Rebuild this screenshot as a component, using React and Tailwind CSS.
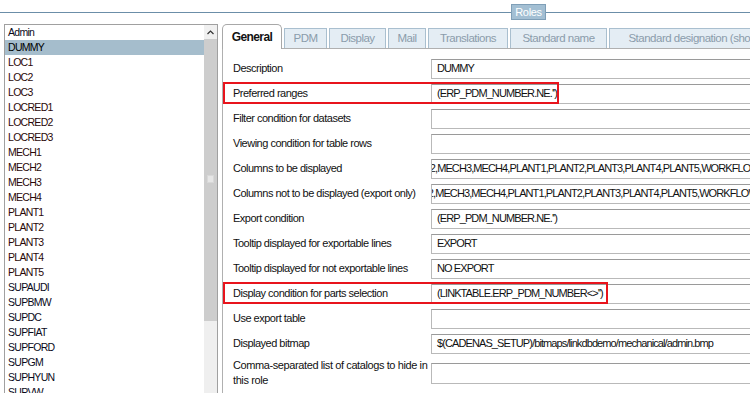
import React from "react";

const roles = [
  "Admin", "DUMMY", "LOC1", "LOC2", "LOC3", "LOCRED1", "LOCRED2", "LOCRED3",
  "MECH1", "MECH2", "MECH3", "MECH4", "PLANT1", "PLANT2", "PLANT3", "PLANT4",
  "PLANT5", "SUPAUDI", "SUPBMW", "SUPDC", "SUPFIAT", "SUPFORD", "SUPGM", "SUPHYUN", "SUPVW",
];

const tabs = [
  { label: "PDM", w: "w-[43px]" },
  { label: "Display", w: "w-[57px]" },
  { label: "Mail", w: "w-[38px]" },
  { label: "Translations", w: "w-[80px]" },
  { label: "Standard name", w: "w-[97px]" },
  { label: "Standard designation (short)", w: "w-[170px]" },
];

const COLS = "MECH2,MECH3,MECH4,PLANT1,PLANT2,PLANT3,PLANT4,PLANT5,WORKFLOW1,WORKFLOW2";

const fields = [
  { label: "Description", value: "DUMMY" },
  { label: "Preferred ranges", value: "(ERP_PDM_NUMBER.NE.'')", mark: "w-[336px]" },
  { label: "Filter condition for datasets", value: "" },
  { label: "Viewing condition for table rows", value: "" },
  { label: "Columns to be displayed", value: COLS, shift: "-ml-[36px]" },
  { label: "Columns not to be displayed (export only)", value: COLS, shift: "-ml-[38px]" },
  { label: "Export condition", value: "(ERP_PDM_NUMBER.NE.'')" },
  { label: "Tooltip displayed for exportable lines", value: "EXPORT" },
  { label: "Tooltip displayed for not exportable lines", value: "NO EXPORT" },
  { label: "Display condition for parts selection", value: "(LINKTABLE.ERP_PDM_NUMBER<>'')", mark: "w-[385px]" },
  { label: "Use export table", value: "" },
  { label: "Displayed bitmap", value: "$(CADENAS_SETUP)/bitmaps/linkdbdemo/mechanical/admin.bmp" },
];

const FieldRow = ({ label, value, mark, shift }) => (
  <div className="relative flex items-center h-[25px] pl-[10px]">
    <div className="w-[198px] shrink-0 text-[11px] tracking-[-0.5px] whitespace-nowrap text-[#111]">{label}</div>
    <div className="h-[20px] w-[400px] shrink-0 border border-[#b9b9b9] border-t-[#9a9a9a] bg-white overflow-hidden flex items-center pl-[5px]">
      <div className={`whitespace-nowrap text-[11px] tracking-[-0.9px] text-[#111] ${shift || ""}`}>{value}</div>
    </div>
    {mark && (
      <div className={`absolute left-0 top-[1px] h-[22px] border-2 border-[#e8141c] ${mark}`} />
    )}
  </div>
);

export default function App() {
  return (
    <div className="w-[750px] h-[393px] bg-white overflow-hidden font-['Liberation_Sans',Arial,sans-serif] text-[#111]">
      {/* Roles header */}
      <div className="flex items-center h-[24px]">
        <div className="w-[511px] h-px bg-[#6b8ea8]" />
        <div className="h-[16px] w-[35px] bg-[#a3bfd3] border border-[#7f9fb7] text-white text-[11px] tracking-[-0.3px] flex items-center justify-center">
          Roles
        </div>
        <div className="flex-1 h-px bg-[#6b8ea8]" />
      </div>

      <div className="flex h-[369px] overflow-hidden">
        {/* Role list */}
        <div className="ml-[4px] w-[214px] shrink-0 h-[380px] border border-[#a0a0a0] flex">
          <div className="flex-1">
            {roles.map((r, i) => (
              <div
                key={r}
                className={`h-[15px] pl-[3px] flex items-center text-[10.5px] tracking-[-0.7px] ${
                  i === 1 ? "bg-[#a5bdcc] text-black" : i >= 2 && i <= 16 ? "text-[#2a0808]" : "text-[#0a0a1a]"
                }`}
              >
                {r}
              </div>
            ))}
          </div>
          <div className="w-[13px] flex flex-col">
            <div className="h-[14px] bg-[#f0f0f0] flex items-center justify-center">
              <svg width="7" height="5" viewBox="0 0 7 5">
                <path d="M0.5 4 L3.5 1 L6.5 4" fill="none" stroke="#333" strokeWidth="1.2" />
              </svg>
            </div>
            <div className="h-[282px] bg-[#cdcdcd] flex flex-col items-center">
              <div className="mt-[136px] w-[7px] h-[8px] bg-[#e6e6e6] border border-[#d8d8d8]" />
            </div>
            <div className="flex-1 bg-[#efefef]" />
          </div>
        </div>

        {/* Detail panel */}
        <div className="ml-[4px] w-[600px] shrink-0 flex flex-col">
          <div className="flex items-end h-[24px]">
            <div className="relative z-10 -mb-px h-[25px] w-[60px] shrink-0 bg-white border border-b-0 border-[#a8a8a8] rounded-t-[5px] flex items-center justify-center text-[12px] font-bold tracking-[-0.6px] text-[#111]">
              General
            </div>
            {tabs.map((t) => (
              <div
                key={t.label}
                className={`ml-[2px] h-[20px] shrink-0 bg-[#e4edf4] border border-b-0 border-[#a9bfcf] flex items-center justify-center text-[11.5px] tracking-[-0.5px] text-[#8b9cab] whitespace-nowrap ${t.w}`}
              >
                {t.label}
              </div>
            ))}
          </div>
          <div className="flex-1 border-l border-t border-[#b0b0b0] pt-[7px]">
            {fields.map((f) => (
              <FieldRow key={f.label} {...f} />
            ))}
            <div className="flex items-center h-[34px] pl-[10px]">
              <div className="w-[198px] shrink-0 text-[11px] tracking-[-0.4px] leading-[15px] text-[#111]">
                Comma-separated list of catalogs to hide in this role
              </div>
              <div className="h-[21px] w-[400px] shrink-0 border border-[#b9b9b9] border-t-[#9a9a9a] bg-white" />
            </div>
          </div>
        </div>
      </div>
    </div>
  );
}
